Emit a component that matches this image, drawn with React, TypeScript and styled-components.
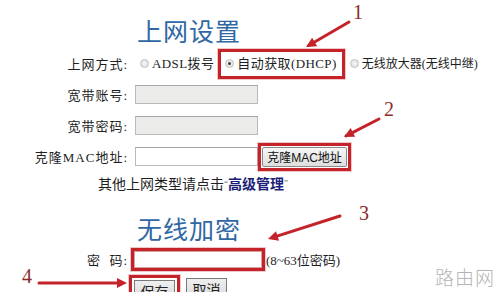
import styled, { createGlobalStyle } from "styled-components";

const GlobalStyle = createGlobalStyle`
  body {
    margin: 0;
    background: #ffffff;
    font-family: "Liberation Serif", "Noto Sans CJK SC", serif;
    color: #1e1e1e;
  }
`;

const RED = "#c4232a";

type Arrow = { x1: number; y1: number; x2: number; y2: number };

const arrows: Arrow[] = [
  { x1: 349, y1: 22, x2: 306, y2: 47 },
  { x1: 379, y1: 119, x2: 344, y2: 137 },
  { x1: 340, y1: 216, x2: 268, y2: 239 },
  { x1: 39, y1: 283, x2: 127, y2: 283 },
];

const labels = [
  { n: "1", x: 353, y: 2 },
  { n: "2", x: 384, y: 99 },
  { n: "3", x: 359, y: 203 },
  { n: "4", x: 22, y: 266 },
];

const headFor = ({ x1, y1, x2, y2 }: Arrow) => {
  const a = Math.atan2(y2 - y1, x2 - x1);
  const len = 10;
  const w = 5;
  const bx = x2 - Math.cos(a) * len;
  const by = y2 - Math.sin(a) * len;
  const px = -Math.sin(a) * w;
  const py = Math.cos(a) * w;
  return `${x2},${y2} ${bx + px},${by + py} ${bx - px},${by - py}`;
};

const App = () => {
  return (
    <Page>
      <GlobalStyle />
      <SectionTitle>上网设置</SectionTitle>
      <FormGrid>
        <Label>上网方式:</Label>
        <Field>
          <Option>
            <Radio />
            ADSL拨号
          </Option>
          <Highlight>
            <Option>
              <Radio checked />
              自动获取(DHCP)
            </Option>
          </Highlight>
          <Option $small>
            <Radio />
            无线放大器(无线中继)
          </Option>
        </Field>

        <Label>宽带账号:</Label>
        <Field>
          <TextBox disabled />
        </Field>

        <Label>宽带密码:</Label>
        <Field>
          <TextBox disabled />
        </Field>

        <Label>克隆MAC地址:</Label>
        <Field>
          <TextBox />
          <Highlight $pad={1}>
            <CloneButton>克隆MAC地址</CloneButton>
          </Highlight>
        </Field>
      </FormGrid>

      <Hint>
        其他上网类型请点击<Quote>“</Quote>
        <Strong>高级管理</Strong>
        <Quote>”</Quote>
      </Hint>

      <SectionTitle $top={20}>无线加密</SectionTitle>
      <PasswordGrid>
        <Label>密&nbsp;&nbsp;码:</Label>
        <Field>
          <Highlight $pad={0} $shift={-4}>
            <PasswordBox />
          </Highlight>
          <Note>(8~63位密码)</Note>
        </Field>
      </PasswordGrid>

      <Actions>
        <Highlight $pad={2}>
          <FormButton>保存</FormButton>
        </Highlight>
        <FormButton $offset={3}>取消</FormButton>
      </Actions>

      <Overlay width="500" height="292" viewBox="0 0 500 292">
        {arrows.map((a, i) => (
          <g key={i}>
            <line
              x1={a.x1}
              y1={a.y1}
              x2={a.x2 - (a.x2 - a.x1) * 0.06}
              y2={a.y2 - (a.y2 - a.y1) * 0.06}
              stroke={RED}
              strokeWidth="3"
              strokeLinecap="round"
            />
            <polygon points={headFor(a)} fill={RED} />
          </g>
        ))}
      </Overlay>
      {labels.map((l) => (
        <StepNumber key={l.n} style={{ left: l.x, top: l.y }}>
          {l.n}
        </StepNumber>
      ))}
      <Watermark>路由网</Watermark>
    </Page>
  );
};

const Page = styled.div`
  position: relative;
  width: 500px;
  height: 292px;
  overflow: hidden;
  font-size: 13px;
`;

const SectionTitle = styled.div<{ $top?: number }>`
  padding-left: 137px;
  margin-top: ${(p) => p.$top ?? 18}px;
  font-size: 25px;
  line-height: 29px;
  letter-spacing: 1px;
  color: #2f68a4;
`;

const FormGrid = styled.div`
  display: grid;
  grid-template-columns: 128px auto;
  grid-auto-rows: 31px;
  column-gap: 7px;
  margin-top: 1px;
`;

const PasswordGrid = styled(FormGrid)`
  grid-auto-rows: 29px;
  margin-top: 0;
`;

const Label = styled.div`
  display: flex;
  align-items: center;
  justify-content: flex-end;
  white-space: nowrap;
  letter-spacing: 1px;
`;

const Field = styled.div`
  display: flex;
  align-items: center;
  white-space: nowrap;
`;

const Option = styled.label<{ $small?: boolean }>`
  display: inline-flex;
  align-items: center;
  line-height: 16px;
  margin-left: 5px;
  margin-right: 4px;
  font-size: ${(p) => (p.$small ? 12 : 13)}px;
  letter-spacing: ${(p) => (p.$small ? 0 : 0.4)}px;
`;

const Radio = styled.span<{ checked?: boolean }>`
  width: 9px;
  height: 9px;
  margin-right: 3px;
  border-radius: 50%;
  border: 1px solid #c2c2c2;
  background: radial-gradient(circle, #f7f7f7 0%, #d9d9d9 100%);
  box-sizing: border-box;
  display: inline-flex;
  align-items: center;
  justify-content: center;
  flex-shrink: 0;
  &::after {
    content: "";
    width: 3px;
    height: 3px;
    border-radius: 50%;
    background: ${(p) => (p.checked ? "#3c3c3c" : "transparent")};
  }
`;

const Highlight = styled.span<{ $pad?: number; $shift?: number }>`
  display: inline-flex;
  align-items: center;
  border: 3px solid ${RED};
  padding: ${(p) => p.$pad ?? 2}px;
  margin-left: ${(p) => p.$shift ?? 0}px;
  box-shadow: 0 0 0 1px rgba(196, 35, 42, 0.25);
  & > ${Option} {
    margin: 0;
    padding: 2px 3px 2px 2px;
  }
`;

const TextBox = styled.input`
  width: 123px;
  height: 19px;
  box-sizing: border-box;
  border: 1px solid #b9b9b9;
  border-top-color: #a5a5a5;
  background: ${(p) => (p.disabled ? "#ebebe9" : "#ffffff")};
  margin: 0;
  padding: 0;
`;

const PasswordBox = styled(TextBox)`
  width: 128px;
  height: 17px;
  border-color: #d9a0a0;
`;

const CloneButton = styled.button`
  width: 85px;
  height: 20px;
  padding: 0;
  font-family: "Liberation Sans", "Noto Sans CJK SC", sans-serif;
  font-size: 12px;
  color: #111;
  background: linear-gradient(#f6f6f6, #dedede);
  border: 1px solid #8a8a8a;
  border-radius: 2px;
`;

const Hint = styled.div`
  padding-left: 98px;
  line-height: 22px;
  font-size: 14px;
  white-space: nowrap;
`;

const Quote = styled.span`
  font-size: 9px;
  color: #666;
  vertical-align: 3px;
`;

const Strong = styled.b`
  color: #1c1f78;
  font-family: "Noto Sans CJK SC", sans-serif;
  font-size: 14px;
`;

const Note = styled.span`
  margin-left: 1px;
`;

const Actions = styled.div`
  display: flex;
  align-items: flex-start;
  gap: 6px;
  padding-left: 129px;
  margin-top: 1px;
`;

const FormButton = styled.button<{ $offset?: number }>`
  width: 41px;
  height: 21px;
  padding: 0;
  font-family: "Noto Sans CJK SC", sans-serif;
  font-size: 14px;
  color: #222;
  background: linear-gradient(#efefef, #d9d9d9);
  border: 1px solid #7a7a7a;
  margin-top: ${(p) => p.$offset ?? 0}px;
`;

const Overlay = styled.svg`
  position: absolute;
  left: 0;
  top: 0;
  pointer-events: none;
`;

const StepNumber = styled.span`
  position: absolute;
  font-family: "Liberation Serif", serif;
  font-size: 20px;
  line-height: 20px;
  color: #8c2a2a;
`;

const Watermark = styled.span`
  position: absolute;
  right: 5px;
  bottom: 2px;
  font-family: "Noto Sans CJK SC", sans-serif;
  font-size: 19px;
  font-weight: 300;
  color: #b4b4b4;
  letter-spacing: 1px;
`;

export default App;
